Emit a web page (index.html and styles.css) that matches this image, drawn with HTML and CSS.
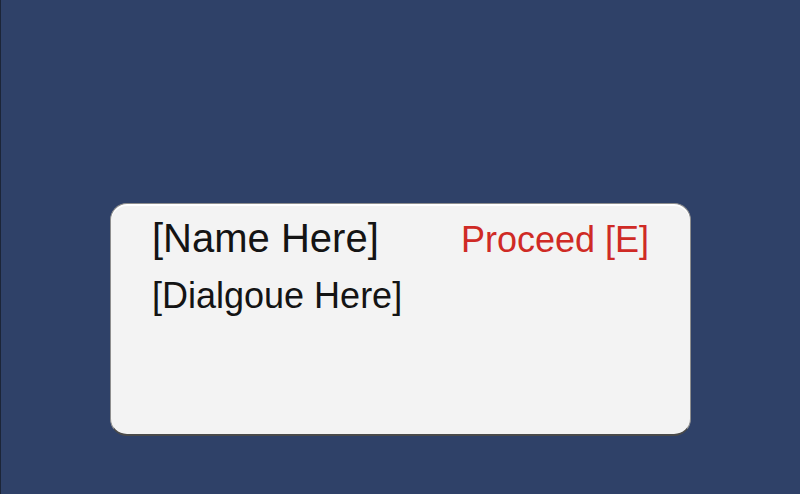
FILE: index.html
```html
<!DOCTYPE html>
<html>
<head>
<meta charset="utf-8">
<link rel="stylesheet" href="styles.css">
</head>
<body>
<div class="stage">
  <div class="dialog">
    <div class="dialog-head">
      <span class="name">[Name Here]</span>
      <span class="proceed">Proceed [E]</span>
    </div>
    <div class="line">[Dialgoue Here]</div>
  </div>
</div>
</body>
</html>
```
FILE: styles.css
```css
html, body {
  margin: 0;
  padding: 0;
  height: 100%;
}
body {
  background: #2f4168;
  font-family: "Liberation Sans", Arial, sans-serif;
  overflow: hidden;
}
.stage {
  height: 100%;
  border-left: 1px solid #1c2538;
  padding: 203px 0 0 109px;
  box-sizing: border-box;
}
.dialog {
  width: 581px;
  height: 233px;
  box-sizing: border-box;
  background: #f3f3f3;
  border: 1px solid #8e8e8e;
  border-bottom: 2px solid #4a4a4a;
  border-radius: 17px;
  box-shadow: inset 0 2px 0 #ffffff;
  padding: 14px 41px 0 41px;
}
.dialog-head {
  display: flex;
  justify-content: space-between;
  align-items: baseline;
}
.name {
  font-size: 40px;
  line-height: 40px;
  color: #141414;
}
.proceed {
  font-size: 36px;
  line-height: 40px;
  color: #cf2a25;
}
.line {
  margin-top: 18px;
  font-size: 36px;
  line-height: 36px;
  color: #141414;
}
```
